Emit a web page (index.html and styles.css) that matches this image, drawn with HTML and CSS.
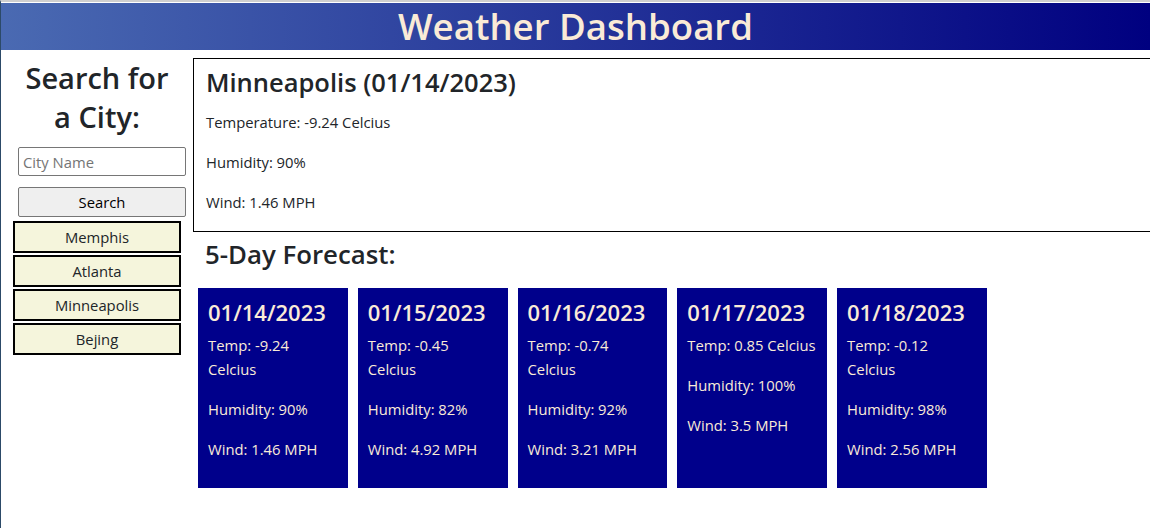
FILE: index.html
```html
<!DOCTYPE html>
<html lang="en">
<head>
<meta charset="utf-8">
<title>Weather Dashboard</title>
<link rel="stylesheet" href="styles.css">
</head>
<body>
<header class="top">
  <h1 class="title">Weather Dashboard</h1>
</header>
<div class="layout">
  <aside class="sidebar">
    <h2 class="side-title">Search for a City:</h2>
    <input class="city-input" type="text" placeholder="City Name">
    <button class="search-btn" type="button">Search</button>
    <div class="history">
      <button class="city-btn" type="button">Memphis</button>
      <button class="city-btn" type="button">Atlanta</button>
      <button class="city-btn" type="button">Minneapolis</button>
      <button class="city-btn" type="button">Bejing</button>
    </div>
  </aside>
  <main class="main">
    <section class="current">
      <h3 class="current-title">Minneapolis (01/14/2023)</h3>
      <p class="line">Temperature: -9.24 Celcius</p>
      <p class="line">Humidity: 90%</p>
      <p class="line">Wind: 1.46 MPH</p>
    </section>
    <h3 class="forecast-title">5-Day Forecast:</h3>
    <div class="cards">
      <div class="card">
        <h4 class="card-date">01/14/2023</h4>
        <p class="line">Temp: -9.24 Celcius</p>
        <p class="line">Humidity: 90%</p>
        <p class="line">Wind: 1.46 MPH</p>
      </div>
      <div class="card">
        <h4 class="card-date">01/15/2023</h4>
        <p class="line">Temp: -0.45 Celcius</p>
        <p class="line">Humidity: 82%</p>
        <p class="line">Wind: 4.92 MPH</p>
      </div>
      <div class="card">
        <h4 class="card-date">01/16/2023</h4>
        <p class="line">Temp: -0.74 Celcius</p>
        <p class="line">Humidity: 92%</p>
        <p class="line">Wind: 3.21 MPH</p>
      </div>
      <div class="card">
        <h4 class="card-date">01/17/2023</h4>
        <p class="line">Temp: 0.85 Celcius</p>
        <p class="line">Humidity: 100%</p>
        <p class="line">Wind: 3.5 MPH</p>
      </div>
      <div class="card">
        <h4 class="card-date">01/18/2023</h4>
        <p class="line">Temp: -0.12 Celcius</p>
        <p class="line">Humidity: 98%</p>
        <p class="line">Wind: 2.56 MPH</p>
      </div>
    </div>
  </main>
</div>
</body>
</html>
```
FILE: styles.css
```css
* { box-sizing: border-box; }

html {
  background: #ffffff;
}

body {
  margin: 0;
  height: 528px;
  overflow: hidden;
  border-top: 2px solid #cfcfcf;
  border-left: 1px solid #2c4a68;
  padding-top: 1px;
  font-family: "Open Sans", "Noto Sans", sans-serif;
  font-size: 14.8px;
  line-height: 24px;
  color: #212529;
}

.top {
  height: 47px;
  background: linear-gradient(to right, #4a6ab2, #000080);
  display: flex;
  align-items: center;
  justify-content: center;
}

.title {
  margin: 0;
  font-size: 36.6px;
  font-weight: 600;
  line-height: 47px;
  color: #faebd7;
}

.layout {
  display: flex;
  align-items: flex-start;
  padding-top: 8px;
}

.sidebar {
  width: 192px;
  flex: none;
  padding-left: 12px;
  display: flex;
  flex-direction: column;
}

.side-title {
  margin: 0;
  width: 168px;
  padding: 0 10px;
  text-align: center;
  font-size: 29px;
  font-weight: 600;
  line-height: 39px;
}

.city-input {
  margin: 11px 0 0 5px;
  width: 168px;
  height: 29px;
  padding: 0 4px;
  border: 1px solid #767676;
  border-radius: 2px;
  font-family: inherit;
  font-size: 14.8px;
  color: #212529;
}

.city-input::placeholder {
  color: #757575;
}

.search-btn {
  margin: 11px 0 0 5px;
  width: 168px;
  height: 30px;
  border: 1px solid #767676;
  border-radius: 2px;
  background: #efefef;
  font-family: inherit;
  font-size: 14.8px;
  color: #000;
  padding: 0;
}

.history {
  margin-top: 4px;
  display: flex;
  flex-direction: column;
  gap: 2px;
}

.city-btn {
  width: 168px;
  height: 32px;
  border: 2px solid #000;
  background: #f5f5dc;
  font-family: inherit;
  font-size: 14.8px;
  color: #212529;
  padding: 0;
}

.main {
  flex: 1;
  min-width: 0;
}

.current {
  width: 1000px;
  border: 1px solid #000;
  padding: 6px 12px 1px 12px;
}

.current-title {
  margin: 0 0 11px 0;
  font-size: 25.5px;
  font-weight: 600;
  line-height: 34px;
}

.line {
  margin: 0 0 16px 0;
}

.forecast-title {
  margin: 5px 0 0 12px;
  font-size: 25.8px;
  font-weight: 600;
  line-height: 34px;
}

.cards {
  display: flex;
  gap: 10px;
  margin: 17px 0 0 5px;
  align-items: stretch;
}

.card {
  width: 149.75px;
  flex: none;
  background: #00008b;
  color: #faebd7;
  padding: 10px 10px 11px 10px;
}

.card-date {
  margin: 0 0 6px 0;
  font-size: 22px;
  font-weight: 600;
  line-height: 29px;
}
```
